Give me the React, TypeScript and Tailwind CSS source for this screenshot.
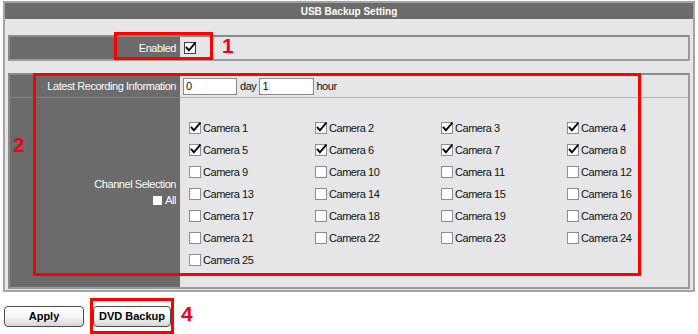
import React from 'react';

const label = "font-['Liberation_Sans',Arial,sans-serif] text-[11px] tracking-[-0.45px]";

// classic checkbox, drawn
const Check = ({ checked, dark = false }: { checked: boolean; dark?: boolean }) => (
  <svg width="13" height="13" viewBox="0 0 13 13" className="shrink-0 overflow-visible">
    <rect x="0.5" y="0.5" width="11" height="11" fill="#fff" stroke={dark ? '#3c3c3c' : '#8e8e8e'} />
    {checked && (
      <path d="M2.6 5.6 L4.9 8.3 L10.8 1.4" fill="none" stroke="#000" strokeWidth="1.9" strokeLinecap="square" />
    )}
  </svg>
);

const cameras = Array.from({ length: 25 }, (_, i) => ({ n: i + 1, on: i < 8 }));

const App = () => {
  return (
    <div className="relative w-[698px] h-[334px] bg-white overflow-hidden font-['Liberation_Sans',Arial,sans-serif]">
      {/* panel */}
      <div className="ml-[3px] mt-[1px] w-[692px] border-2 border-[#a4a4a4]">
        <div className="h-[16px] bg-[#6b6b6b] flex items-center justify-center text-white text-[10px] font-bold">
          USB Backup Setting
        </div>

        <div className={`bg-[#e6e6e8] px-[3px] pt-[16px] pb-[1px] ${label}`}>
          {/* Enabled */}
          <div className="flex border-2 border-t-[#8a8a8a] border-l-[#8a8a8a] border-r-[#9c9c9c] border-b-[#9c9c9c]">
            <div className="w-[170px] shrink-0 h-[22px] bg-[#6b6b6b] flex items-center justify-end pr-[4px] text-white">
              Enabled
            </div>
            <div className="flex-1 flex items-center pl-[4px]">
              <Check checked dark />
            </div>
          </div>

          {/* recording + channels */}
          <div className="mt-[12px] border-2 border-t-[#8a8a8a] border-l-[#8a8a8a] border-r-[#9c9c9c] border-b-[#9c9c9c]">
            <div className="flex h-[23px]">
              <div className="w-[170px] shrink-0 bg-[#6b6b6b] border-b border-[#828282] flex items-center justify-end pr-[4px] text-white">
                Latest Recording Information
              </div>
              <div className="flex-1 min-w-0 border-b border-[#b4b4b4] flex items-center pl-[3px] text-[#111]">
                <div className="w-[54px] h-[17px] bg-white border border-[#8a8a8a] pl-[2px] leading-[15px]">0</div>
                <span className="ml-[3px] mr-[3px]">day</span>
                <div className="w-[55px] h-[17px] bg-white border border-[#8a8a8a] pl-[2px] leading-[15px]">1</div>
                <span className="ml-[2px]">hour</span>
              </div>
            </div>
            <div className="flex h-[189px]">
              <div className="w-[170px] shrink-0 bg-[#6b6b6b] flex flex-col items-end justify-center pr-[4px] text-white leading-[13px]">
                <span>Channel Selection</span>
                <span className="mt-[3px] flex items-center">
                  <span className="w-[9px] h-[9px] bg-white mr-[3px]" />
                  All
                </span>
              </div>
              <div className="flex-1 min-w-0 pl-[9px] pt-[19px]">
                <div className="grid grid-cols-[126px_126px_126px_126px] auto-rows-[22px] text-[#111]">
                  {cameras.map(c => (
                    <div key={c.n} className="flex items-center">
                      <Check checked={c.on} />
                      <span className="ml-[1px]">Camera {c.n}</span>
                    </div>
                  ))}
                </div>
              </div>
            </div>
          </div>
        </div>
      </div>

      {/* buttons */}
      <div className="flex gap-[9px] ml-[4px] mt-[14px]">
        <button className="w-[80px] h-[21px] rounded-[4px] border border-[#4a4a4a] bg-linear-to-b from-white via-[#f6f6f6] to-[#d5d5d5] text-[11px] font-bold text-black">
          Apply
        </button>
        <button className="w-[78px] h-[21px] rounded-[4px] border border-[#4a4a4a] bg-linear-to-b from-white via-[#f6f6f6] to-[#d5d5d5] text-[11px] font-bold text-black">
          DVD Backup
        </button>
      </div>

      {/* annotations */}
      <div className="absolute left-[114px] top-[32px] w-[99px] h-[28px] border-[3px] border-[#ff0000]" />
      <div className="absolute left-[33px] top-[73px] w-[608px] h-[203px] border-[3px] border-[#ff0000]" />
      <div className="absolute left-[90px] top-[298px] w-[84px] h-[36px] border-[3px] border-[#ff0000]" />
      <div className="absolute left-[222px] top-[35px] text-[21px] leading-[21px] font-bold text-[#f0001c]">1</div>
      <div className="absolute left-[13px] top-[134px] text-[21px] leading-[21px] font-bold text-[#f0001c]">2</div>
      <div className="absolute left-[181px] top-[303px] text-[21px] leading-[21px] font-bold text-[#f0001c]">4</div>
    </div>
  );
};

export default App;
